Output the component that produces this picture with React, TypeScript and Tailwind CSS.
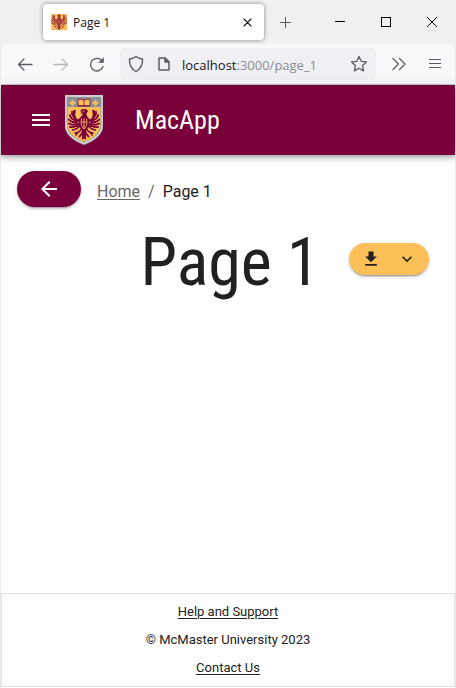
import React from "react";

const condensed = "font-['Roboto_Condensed','Roboto',sans-serif]";

/** One wing, leg and half of the tail; mirrored to make the whole bird. */
function EagleHalf() {
  return (
    <g fill="none" stroke="currentColor" strokeLinecap="round">
      <path d="M13 11 Q10 14 7.500 11 Q5 8 6.500 3" strokeWidth="2.600" />
      <path d="M6.500 9 Q3.500 7.500 4 3.500" strokeWidth="1.700" />
      <path d="M8 12.500 Q3 11.500 1.800 7" strokeWidth="1.800" />
      <path d="M9 14 Q3.500 15 0.800 11.500" strokeWidth="1.800" />
      <path d="M10 15.500 Q5 18 0.800 15.500" strokeWidth="1.800" />
      <path d="M11 16.500 Q7 20 2 19" strokeWidth="1.800" />
      <path d="M12 17.500 Q9 21.500 4.500 22" strokeWidth="1.700" />
      <path d="M13.500 20.500 Q12 24.500 7 25 M9.500 24.500 L8 27" strokeWidth="1.500" />
      <path d="M15 22 Q14.500 26 11.500 28.500" strokeWidth="2" />
      <path d="M15.500 23 L14.800 30.500" strokeWidth="2" />
    </g>
  );
}

/** Spread-winged eagle, drawn on a 32 x 32 grid. */
function Eagle({ color, detail }: { color: string; detail: string }) {
  return (
    <g style={{ color }}>
      <EagleHalf />
      <g transform="translate(32 0) scale(-1 1)"><EagleHalf /></g>
      <path d="M12 3 L14 1.200 L18 1 L20 3 L18.500 5.500 L19 8 L21 11 V17 Q20 21 16 24 Q12 21 11 17 V11 L14 7.500 L15 5.500 L12 5.500 L14 4 Z" fill="currentColor" />
      <path d="M16 10.500 V20.500 M13.500 14 H18.500 M13.500 10.500 Q12 17 16 21 Q20 17 18.500 10.500" fill="none" stroke={detail} strokeWidth="0.900" />
      <path d="M14.500 3 H16.500" stroke={detail} strokeWidth="0.800" />
    </g>
  );
}

function Crest() {
  const shield = "M1 1 H37 V30 C37 39 28 45 19 48.500 C10 45 1 39 1 30 Z";
  return (
    <svg width="38" height="50" viewBox="0 0 38 50" aria-label="McMaster crest" role="img">
      <path d={shield} fill="#fdbf57" />
      <path d="M1 1 H37 V12 H1 Z" fill="#8b9092" />
      <path d={shield} fill="none" stroke="#8b9092" strokeWidth="3" />
      <path d={shield} fill="none" stroke="#e3e4e5" strokeWidth="1.300" />
      <path d="M13 4.500 Q16 3.500 19 5 Q22 3.500 25 4.500 V11 H13 Z" fill="#fdbf57" stroke="#7a003c" strokeWidth="0.800" />
      <path d="M19 5 V11 M13 10.800 H25" stroke="#7a003c" strokeWidth="0.800" />
      <path d="M7.500 5 L8.500 7 L10.500 8 L8.500 9 L7.500 11 L6.500 9 L4.500 8 L6.500 7 Z M30.500 5 L31.500 7 L33.500 8 L31.500 9 L30.500 11 L29.500 9 L27.500 8 L29.500 7 Z" fill="#fdbf57" stroke="#fdbf57" strokeWidth="0.800" />
      <g transform="translate(3 13)">
        <Eagle color="#7a003c" detail="#fdbf57" />
      </g>
    </svg>
  );
}

const line = {
  fill: "none",
  stroke: "currentColor",
  strokeLinecap: "round" as const,
  strokeLinejoin: "round" as const,
};

function TabStrip() {
  return (
    <div className="flex h-11 items-center bg-[#f0f0f0] pl-[42px]">
      <div className="flex h-9 w-[221px] items-center rounded bg-white px-2 shadow-[0_0_4px_rgba(0,0,0,0.45)]">
        <svg width="16" height="16" viewBox="0 0 32 32" aria-hidden="true">
          <rect width="32" height="32" fill="#fdbf57" />
          <Eagle color="#9a3041" detail="#c9713f" />
        </svg>
        <span className="ml-[6px] flex-1 pt-px text-xs text-[#15141a]">Page 1</span>
        <button type="button" aria-label="Close tab" className="p-1 text-[#15141a]">
          <svg width="9" height="9" viewBox="0 0 9 9" {...line}><path d="M1 1 L8 8 M8 1 L1 8" strokeWidth="1.100" /></svg>
        </button>
      </div>
      <button type="button" aria-label="New tab" className="ml-4 text-[#5b5b66]">
        <svg width="11" height="11" viewBox="0 0 11 11" {...line}><path d="M5.500 0.500 V10.500 M0.500 5.500 H10.500" /></svg>
      </button>
      <div className="ml-auto flex text-black">
        <button type="button" aria-label="Minimize" className="flex w-[46px] justify-center">
          <svg width="10" height="10" viewBox="0 0 10 10"><path d="M0 4.500 H10" stroke="currentColor" /></svg>
        </button>
        <button type="button" aria-label="Maximize" className="flex w-[46px] justify-center">
          <svg width="10" height="10" viewBox="0 0 10 10"><rect x="0.500" y="0.500" width="9" height="9" fill="none" stroke="currentColor" /></svg>
        </button>
        <button type="button" aria-label="Close window" className="flex w-[46px] justify-center">
          <svg width="10" height="10" viewBox="0 0 10 10"><path d="M0 0 L10 10 M10 0 L0 10" stroke="currentColor" /></svg>
        </button>
      </div>
    </div>
  );
}

function Toolbar() {
  return (
    <div className="flex h-[41px] items-center border-b border-[#c4c4c8] bg-[#f9f9fb] pr-3 pl-4 text-[#5b5b66]">
      <button type="button" aria-label="Back">
        <svg width="16" height="16" viewBox="0 0 16 16" {...line} strokeWidth="1.300"><path d="M15 8.500 H1.500 M7 3 L1.500 8.500 L7 14" /></svg>
      </button>
      <button type="button" aria-label="Forward" className="ml-5 text-[#b9b9bf]">
        <svg width="16" height="16" viewBox="0 0 16 16" {...line} strokeWidth="1.300"><path d="M1 8.500 H14.500 M9 3 L14.500 8.500 L9 14" /></svg>
      </button>
      <button type="button" aria-label="Reload" className="ml-5">
        <svg width="16" height="16" viewBox="0 0 16 16" {...line} strokeWidth="1.300">
          <path d="M14 10.500 A6.300 6.300 0 1 1 12.500 4.300" />
          <path d="M14.500 2 V6.500 H10 Z" fill="currentColor" strokeWidth="0.600" />
        </svg>
      </button>
      <div className="ml-[15px] flex h-8 min-w-0 flex-1 items-center rounded bg-[#f0f0f4] px-2">
        <svg width="16" height="18" viewBox="0 0 16 18" {...line} strokeWidth="1.400"><path d="M8 1.500 C10 3 12 3.600 14.500 4 C14.800 9.500 12.500 14 8 16.500 C3.500 14 1.200 9.500 1.500 4 C4 3.600 6 3 8 1.500 Z" /></svg>
        <svg className="ml-3" width="16" height="16" viewBox="0 0 16 16" {...line} strokeWidth="1.500">
          <path d="M3 2 H9 L13 6 V14 H3 Z" /><path d="M9 2 V6 H13 Z" fill="currentColor" />
        </svg>
        <p className="ml-[10px] flex-1 pt-1 text-[13px] text-[#8a8a92]"><span className="text-[#15141a]">localhost</span>:3000/page_1</p>
        <button type="button" aria-label="Bookmark this page">
          <svg width="18" height="18" viewBox="0 0 18 18" {...line} strokeWidth="1.300"><path d="M9 1.500 L11.200 6.300 L16.500 6.900 L12.600 10.500 L13.600 15.900 L9 13.200 L4.400 15.900 L5.400 10.500 L1.500 6.900 L6.800 6.300 Z" /></svg>
        </button>
      </div>
      <button type="button" aria-label="More tools" className="ml-4">
        <svg width="14" height="14" viewBox="0 0 14 14" {...line} strokeWidth="1.300"><path d="M1 1.500 L6.500 7 L1 12.500 M7.500 1.500 L13 7 L7.500 12.500" /></svg>
      </button>
      <button type="button" aria-label="Application menu" className="mr-[2px] ml-[23px]">
        <svg width="12" height="12" viewBox="0 0 12 12" stroke="currentColor"><path d="M0 1.500 H12 M0 5.500 H12 M0 9.500 H12" /></svg>
      </button>
    </div>
  );
}

export default function App() {
  return (
    <div className="flex min-h-screen flex-col border-x border-[#ececec] bg-white pb-px font-['Roboto',sans-serif] text-[#212121]">
      <div className="font-['Open_Sans','Noto_Sans',sans-serif]">
        <TabStrip />
        <Toolbar />
      </div>

      <header className="flex h-[70px] items-center bg-[#7a003c] pl-7 text-white shadow-[0_2px_4px_-1px_rgba(0,0,0,0.2),0_4px_5px_rgba(0,0,0,0.14),0_1px_10px_rgba(0,0,0,0.12)]">
        <button type="button" aria-label="Open menu">
          <svg width="24" height="24" viewBox="0 0 24 24" fill="currentColor"><path d="M3 18h18v-2H3v2zm0-5h18v-2H3v2zm0-7v2h18V6H3z" /></svg>
        </button>
        <div className="ml-3"><Crest /></div>
        <p className={`ml-8 text-[26px] ${condensed}`}>MacApp</p>
      </header>

      <main className="pt-4">
        <div className="flex items-center pl-4">
          <button type="button" aria-label="Go back" className="flex h-9 w-16 items-center justify-center rounded-full bg-[#7a003c] text-white shadow-[0_3px_1px_-2px_rgba(0,0,0,0.2),0_2px_2px_rgba(0,0,0,0.14),0_1px_5px_rgba(0,0,0,0.12)]">
            <svg width="24" height="24" viewBox="0 0 24 24" fill="currentColor"><path d="M20 11H7.830l5.590-5.590L12 4l-8 8 8 8 1.410-1.410L7.830 13H20v-2z" /></svg>
          </button>
          <nav aria-label="Breadcrumb" className="ml-4 pt-[6px]">
            <ol className="flex text-base">
              <li><a href="#home" className="text-[#666666] underline underline-offset-2">Home</a></li>
              <li aria-hidden="true" className="mx-2 text-[#666666]">/</li>
              <li aria-current="page">Page 1</li>
            </ol>
          </nav>
        </div>
        <div className="mt-3 grid grid-cols-[1fr_auto_1fr] items-center">
          <h1 className={`col-start-2 pt-2 pl-1 text-[66px] leading-[72px] ${condensed}`}>Page 1</h1>
          <div className="mr-[26px] flex h-8 justify-self-end rounded-full bg-[#fdbf57] shadow-[0_3px_1px_-2px_rgba(0,0,0,0.2),0_2px_2px_rgba(0,0,0,0.14),0_1px_5px_rgba(0,0,0,0.12)]">
            <button type="button" aria-label="Download" className="flex w-11 items-center justify-center">
              <svg width="20" height="20" viewBox="0 0 24 24" fill="currentColor"><path d="M19 9h-4V3H9v6H5l7 7 7-7zM5 18v2h14v-2H5z" /></svg>
            </button>
            <button type="button" aria-label="More download options" className="flex w-9 items-center pl-1">
              <svg width="20" height="20" viewBox="0 0 24 24" fill="currentColor"><path d="M7.410 8.590 12 13.170l4.590-4.580L18 10l-6 6-6-6 1.410-1.410z" /></svg>
            </button>
          </div>
        </div>
      </main>

      <footer className="mt-auto flex flex-col items-center gap-2 border border-[#e0e0e0] py-2 text-[13px] leading-5">
        <a href="#help" className="underline underline-offset-2">Help and Support</a>
        <p>© McMaster University 2023</p>
        <a href="#contact" className="underline underline-offset-2">Contact Us</a>
      </footer>
    </div>
  );
}
